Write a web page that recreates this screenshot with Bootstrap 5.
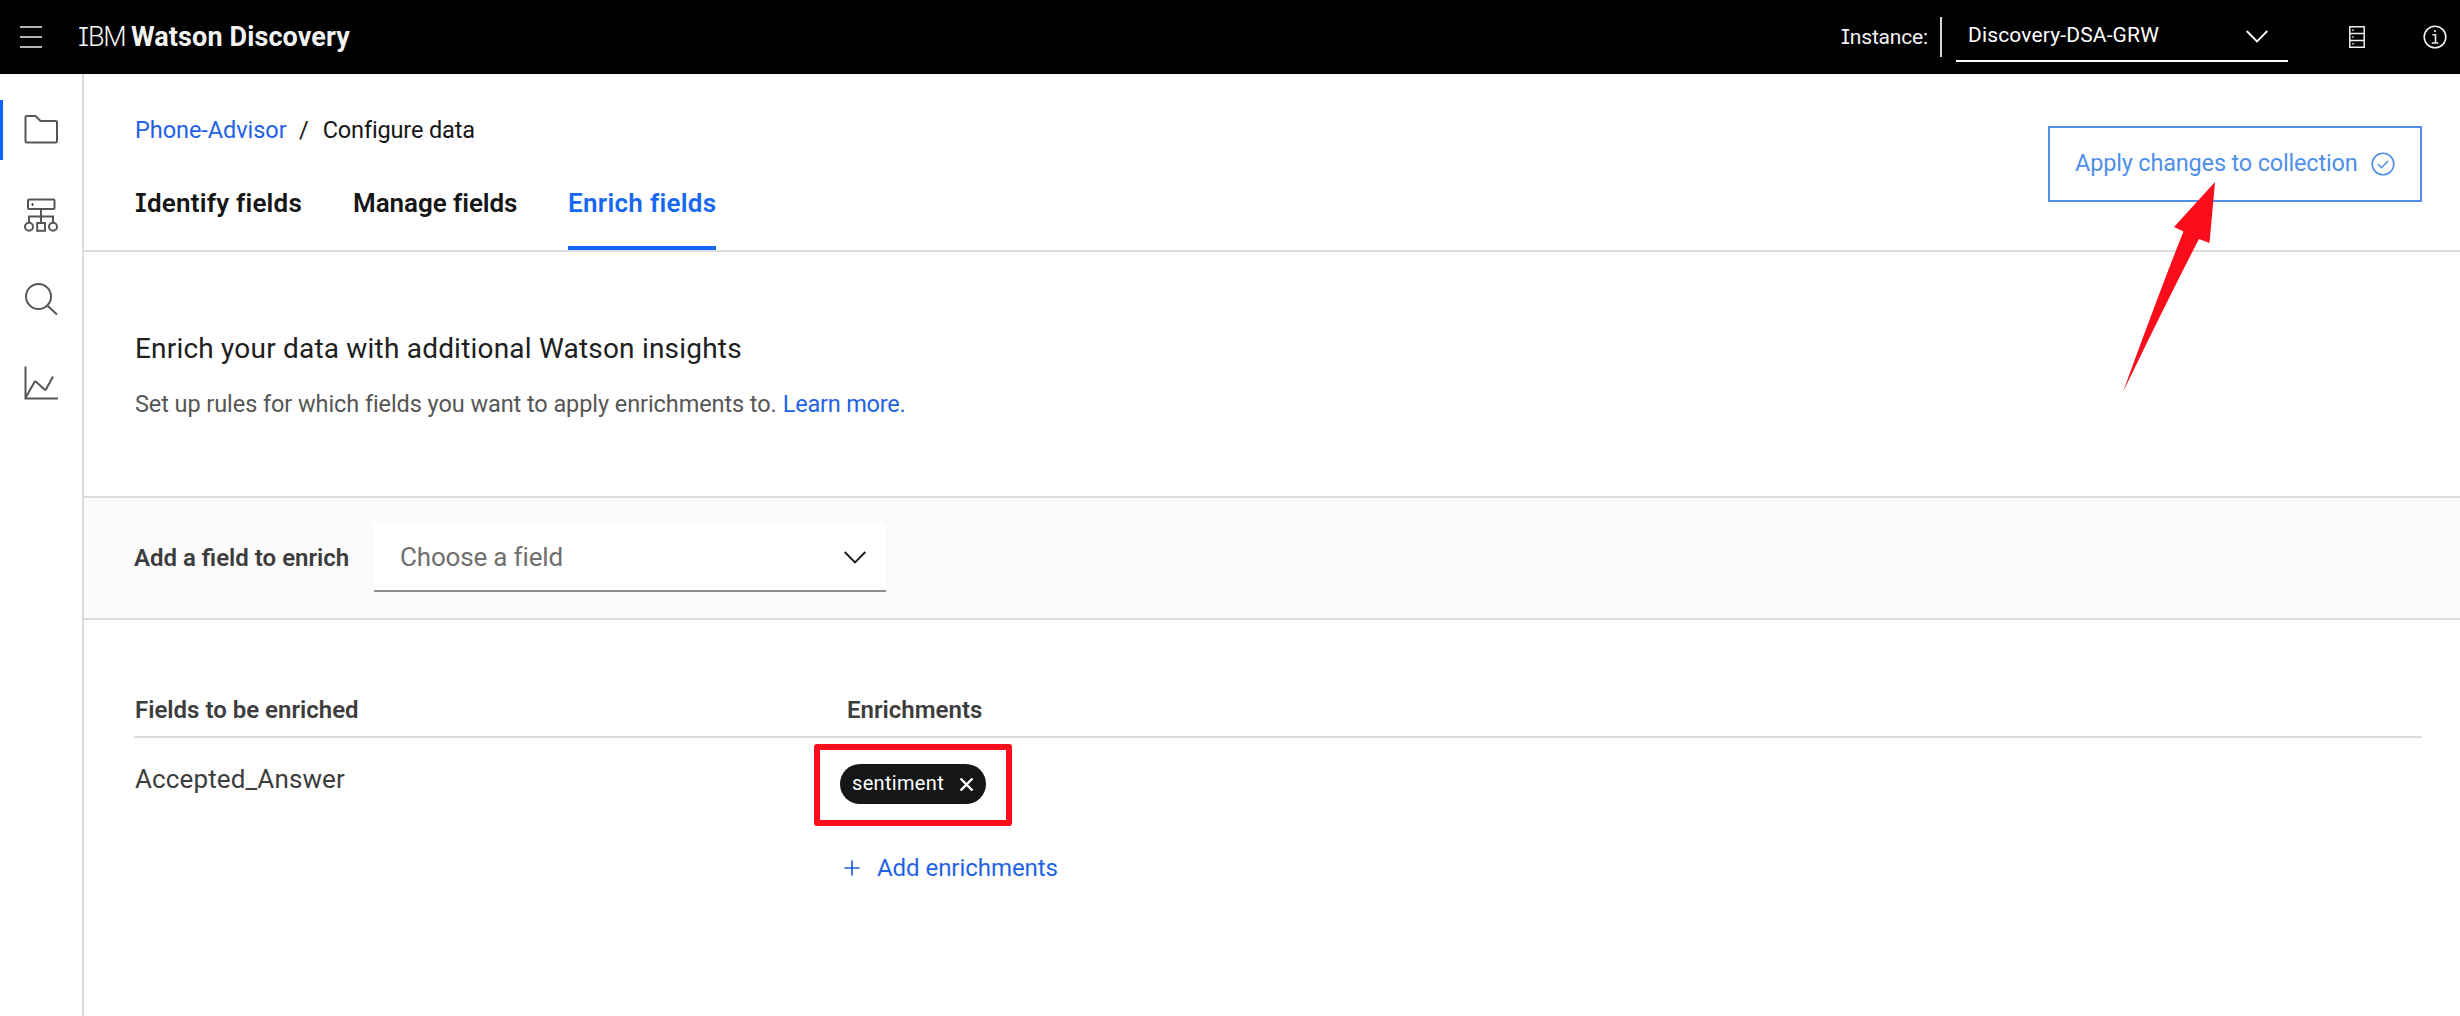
<!DOCTYPE html>
<html lang="en">
<head>
<meta charset="utf-8">
<title>IBM Watson Discovery</title>
<link href="https://cdn.jsdelivr.net/npm/bootstrap@5.3.0/dist/css/bootstrap.min.css" rel="stylesheet">
<style>
body{font-family:Roboto,"Noto Sans",sans-serif;background:#fff;color:#161616;font-size:24px;line-height:32px;height:1016px;overflow:hidden}
a{color:#1f62e6;text-decoration:none}
svg{display:block;flex:none;fill:none}
.t{white-space:nowrap;display:inline-block}
.si{font-family:Inter,sans-serif;font-feature-settings:"cv08";font-size:.97em}
.top-bar{height:74px;background:#000;color:#f3f3f3}
.menu-ic{margin-left:20px}
.brand{font-size:27px;margin-left:36px}
.brand-ibm{font-weight:300;letter-spacing:-1.1px;width:48px}
.brand-name{letter-spacing:.11px}
.inst{font-size:21px;line-height:40px;height:40px;margin-left:auto;padding-right:12px;border-right:2px solid #d8d8d8;letter-spacing:-.17px}
.inst-select{width:332px;height:50px;margin-left:14px;border-bottom:2px solid #fff;font-size:21px;color:#fff;padding:0 20px 0 12px;letter-spacing:.15px}
.inst-select .t{margin-top:-2px}
.inst .t{margin-top:-1px}
.server-ic{margin-left:61px}
.info-ic{margin:0 13px 0 58px}
.side{width:84px;border-right:2px solid #dcdcdc;padding-top:26px;gap:25px;flex:none}
.side a{height:60px;stroke:#565656;stroke-width:2}
.side a.current{box-shadow:inset 3px 0 #0f62fe}
.head{height:178px;border-bottom:2px solid #dcdcdc;padding:40px 38px 0 50px}
.crumbs{font-size:23.5px;padding-left:1px}
.crumbs a{width:152px;letter-spacing:-.05px}
.crumbs i{font-style:normal;margin:0 14px 0 12px}
.crumbs span{letter-spacing:-.15px}
.tabs{margin-top:37px;font-size:26px;line-height:40px;font-weight:600}
.tabs a{color:#161616;padding-bottom:23px;border-bottom:4px solid transparent}
.tabs .tab-id{width:168px;padding-left:1px;margin-right:51px;letter-spacing:.22px}
.tabs .tab-mn{width:164px;margin-right:51px;letter-spacing:-.06px}
.tabs .tab-en{width:148px;letter-spacing:.3px;color:#1668f2;border-color:#1168f8}
.apply{width:374px;height:76px;margin-top:12px;border:2px solid #4f8fea;color:#4f8fea;padding:0 25px;border-radius:0;font-size:23.5px;letter-spacing:-.18px}
.intro{padding:77px 50px 0 51px;height:244px}
.intro h1{font-size:28px;line-height:40px;margin:0 0 19px;font-weight:400;color:#202020;letter-spacing:.2px}
.intro p{color:#565656;margin:0;font-size:23.5px;letter-spacing:-.08px}
.intro p a{margin-left:6px;letter-spacing:-.2px}
.band{height:124px;border:solid #dcdcdc;border-width:2px 0;background:#fbfbfb;padding:24px 50px 0}
.band label{color:#3d3d3d;font-weight:600;width:240px;line-height:72px}
.field{width:512px;height:70px;background:#fff;border-bottom:2px solid #8d8d8d;padding:2px 20px 0 26px;font-size:26px;color:#6f6f6f;letter-spacing:-.17px}
.rules{padding:74px 38px 0 50px;color:#3d3d3d}
.rules-head{font-weight:600;border-bottom:2px solid #dcdcdc;padding-bottom:10px}
.c1{width:680px;flex:none;padding-left:1px}
.rules-head .c2{padding-left:33px}
.val{font-size:26px;line-height:36px;padding-top:23px;letter-spacing:.12px}
.rules-row .c2{padding:26px 0 0 26px}
.pill{width:146px;height:40px;border-radius:20px;background:#161616;color:#fff;font-size:20px;padding:0 12px 2px;position:relative;letter-spacing:.32px}
.hl{position:absolute;left:-26px;top:-20px;width:198px;height:82px;border:6px solid #fc0d1b;border-radius:3px}
.add{margin-top:48px;gap:17px;letter-spacing:-.05px}
.add svg{margin-left:4px}
.arrow{position:absolute;left:2110px;top:170px}
</style>
</head>
<body class="d-flex flex-column position-relative">
<header class="top-bar d-flex align-items-center">
<svg class="menu-ic" width="22" height="22" stroke="#eee" stroke-width="1.6"><path d="M0 1h22M0 11h22M0 21h22"/></svg>
<div class="brand d-flex"><span class="t brand-ibm"><span class="si">I</span>BM</span><span style="width:5px"></span><b class="t brand-name">Watson Discovery</b></div>
<div class="inst"><span class="t"><span class="si">I</span>nstance:</span></div>
<div class="inst-select d-flex align-items-center justify-content-between"><span class="t">Discovery-DSA-GRW</span>
<svg width="22" height="13" stroke="#fff" stroke-width="1.8"><path d="M.7 1 11 11.5 21.300 1"/></svg></div>
<svg class="server-ic" width="16" height="22" stroke="#eee" stroke-width="1.5"><path d="M.8.8h14.4v20.4H.8zM.8 7.6h14.4M.8 14.4h14.4"/><path d="M3.200 4.300h1.500M3.200 11h1.500M3.200 17.800h1.500"/></svg>
<svg class="info-ic" width="24" height="24" stroke="#eee" stroke-width="1.6"><circle cx="12" cy="12" r="10.8"/><path d="M9.500 9.700h3V18M8.800 18h6.400"/><circle cx="12" cy="6.200" r=".7" fill="#eee" stroke-width="1"/></svg>
</header>
<div class="d-flex flex-grow-1">
<nav class="side d-flex flex-column">
<a href="#" class="current d-flex align-items-center justify-content-center"><svg width="40" height="40"><path d="M5.500 6H14.500L19.500 11H34.500Q36 11 36 12.500V31Q36 32.500 34.500 32.500H6Q4.500 32.500 4.500 31V7Q4.500 6 5.500 6Z"/></svg></a>
<a href="#" class="d-flex align-items-center justify-content-center"><svg width="40" height="40"><rect x="7" y="4.500" width="26.500" height="9.500" rx="1"/><path d="M20 14V28M8 27.500V21.500H32V27.500"/><circle cx="8" cy="31.700" r="4"/><circle cx="32" cy="31.700" r="4"/><rect x="16.200" y="28" width="7.800" height="7.800"/><circle cx="11.500" cy="9.500" r=".7" fill="#161616" stroke="#161616" stroke-width="1"/></svg></a>
<a href="#" class="d-flex align-items-center justify-content-center"><svg width="40" height="40"><circle cx="17.500" cy="16.500" r="12.500"/><path d="M26 25.200 36 34.500"/></svg></a>
<a href="#" class="d-flex align-items-center justify-content-center"><svg width="40" height="40"><path d="M4.500 1.500V33.500H37M5 32 13.500 17Q14 16 15 16.800L23.500 24.500Q24.500 25.300 25.200 24L32 11.500"/></svg></a>
</nav>
<main class="flex-grow-1">
<div class="head d-flex justify-content-between align-items-start">
<div>
<div class="crumbs d-flex"><a href="#" class="t">Phone-Advisor</a><i>/</i><span class="t">Configure data</span></div>
<div class="tabs d-flex"><a href="#" class="t tab-id"><span class="si">I</span>dentify fields</a><a href="#" class="t tab-mn">Manage fields</a><a href="#" class="t tab-en">Enrich fields</a></div>
</div>
<button class="apply btn d-flex align-items-center justify-content-between"><span class="t">Apply changes to collection</span>
<svg width="24" height="24" stroke="#4f8fea" stroke-width="1.6"><circle cx="12" cy="12" r="10.800"/><path d="M7 12.200 10.500 15.700 17 9"/></svg></button>
</div>
<section class="intro"><h1><span class="t">Enrich your data with additional Watson insights</span></h1>
<p class="d-flex"><span class="t">Set up rules for which fields you want to apply enrichments to.</span><a href="#" class="t">Learn more.</a></p></section>
<section class="band d-flex"><label><span class="t">Add a field to enrich</span></label>
<div class="field d-flex align-items-center justify-content-between"><span class="t">Choose a field</span><svg width="22" height="13" stroke="#161616" stroke-width="1.800"><path d="M.7 1 11 11.500 21.300 1"/></svg></div></section>
<section class="rules">
<div class="rules-head d-flex"><div class="c1"><span class="t">Fields to be enriched</span></div><div class="c2"><span class="t">Enrichments</span></div></div>
<div class="rules-row d-flex"><div class="c1 val"><span class="t">Accepted_Answer</span></div>
<div class="c2"><div class="pill d-flex align-items-center justify-content-between"><span class="t">sentiment</span><svg width="15" height="15" stroke="#fff" stroke-width="2.400"><path d="M1.500 2.500l12 12M13.500 2.500l-12 12"/></svg><span class="hl"></span></div>
<a href="#" class="add d-flex align-items-center"><svg width="16" height="16" stroke="#1f62e6" stroke-width="1.700"><path d="M8 .5v15M.5 8h15"/></svg><span class="t">Add enrichments</span></a></div></div>
</section>
</main>
</div>
<svg class="arrow" width="120" height="230"><path fill="#fc0d1b" d="M105 12 64 57 73.500 61.500Q50 120 13 222Q60 125 89 69L99.500 73Z"/></svg>
<script src="https://cdn.jsdelivr.net/npm/bootstrap@5.3.0/dist/js/bootstrap.bundle.min.js"></script>
</body>
</html>
